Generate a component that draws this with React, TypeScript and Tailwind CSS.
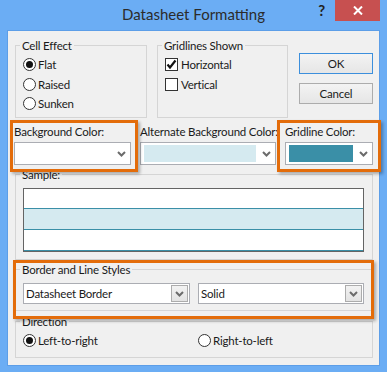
import React from "react";

const font = "font-['Lato','Liberation_Sans',sans-serif]";

function Chevron() {
    return (
        <svg width="9" height="6" viewBox="0 0 9 6" className="shrink-0">
            <path d="M1 1 L4.5 4.5 L8 1" stroke="#6b6b6b" strokeWidth="2" fill="none" />
        </svg>
    );
}

function Radio({ checked, label }: { checked?: boolean; label: string }) {
    return (
        <div className="flex items-center gap-[2px] h-[19.5px]">
            <span className="w-[13px] h-[13px] rounded-full border border-[#333] bg-white flex items-center justify-center">
                {checked && <span className="w-[7px] h-[7px] rounded-full bg-[#111]" />}
            </span>
            <span className="leading-[15px]">{label}</span>
        </div>
    );
}

function Checkbox({ checked, label }: { checked?: boolean; label: string }) {
    return (
        <div className="flex items-center gap-[3px] h-[19.5px]">
            <span className="w-[13px] h-[13px] border border-[#333] bg-white flex items-center justify-center">
                {checked && (
                    <svg width="11" height="11" viewBox="0 0 11 11">
                        <path d="M1.5 5.5 L4 8.5 L9.5 1.5" stroke="#111" strokeWidth="2.2" fill="none" />
                    </svg>
                )}
            </span>
            <span className="leading-[15px]">{label}</span>
        </div>
    );
}

function Group({ title, className, children }: { title: string; className: string; children?: React.ReactNode }) {
    return (
        <fieldset className={`border border-[#d5d5d5] p-0 m-0 ${className}`}>
            <legend className="ml-[4px] px-[2px] leading-[15px]">{title}</legend>
            {children}
        </fieldset>
    );
}

function ColorSelect({ label, width, swatch, swatchWidth }: { label: string; width: string; swatch?: string; swatchWidth?: string }) {
    return (
        <div className={width}>
            <div className="leading-[15px] whitespace-nowrap">{label}</div>
            <div className="mt-[3px] h-[23px] border border-[#abadb3] bg-white flex items-center pl-[3px] pr-[4px]">
                {swatch ? <div className={`h-[17px] ${swatchWidth} ${swatch}`} /> : null}
                <div className="ml-auto">
                    <Chevron />
                </div>
            </div>
        </div>
    );
}

function ComboBox({ value, width }: { value: string; width: string }) {
    return (
        <div className={`h-[21px] border border-[#abadb3] bg-white flex items-center pl-[2px] pr-[1px] ${width}`}>
            <span className="leading-[15px]">{value}</span>
            <span className="ml-auto w-[17px] h-[17px] border border-[#acacac] bg-gradient-to-b from-[#f2f2f2] to-[#e3e3e3] flex items-center justify-center">
                <Chevron />
            </span>
        </div>
    );
}

export default function App() {
    return (
        <div className={`w-[387px] h-[372px] bg-[#6badf4] text-[#1a1a1a] text-[11.5px] tracking-[-0.2px] ${font}`}>
            {/* Title bar */}
            <div className="h-[30px] grid grid-cols-[1fr_auto_1fr]">
                <div />
                <div className="pt-[5px] text-[15px] leading-[18px] tracking-normal text-[#2b2b2b]">Datasheet Formatting</div>
                <div className="flex justify-end items-start">
                    <span className="mt-[3px] mr-[10px] text-[15px] leading-[15px] font-bold text-[#222]">?</span>
                    <button className="w-[45px] h-[21px] bg-[#c75050] flex items-center justify-center mr-[7px]">
                        <svg width="10" height="9" viewBox="0 0 10 9">
                            <path d="M1 0.5 L9 8.5 M9 0.5 L1 8.5" stroke="#fff" strokeWidth="2" />
                        </svg>
                    </button>
                </div>
            </div>

            {/* Dialog body */}
            <div className="relative mx-[7px] w-[373px] h-[336px] border border-[#5c9ee8] bg-[#f0f0f0]">
                {/* Top row */}
                <div className="flex items-start pt-[7px] pl-[7px]">
                    <Group title="Cell Effect" className="w-[132px] h-[80px]">
                        <div className="pt-[2px] pl-[7px]">
                            <Radio checked label="Flat" />
                            <Radio label="Raised" />
                            <Radio label="Sunken" />
                        </div>
                    </Group>
                    <Group title="Gridlines Shown" className="ml-[10px] w-[131px] h-[80px]">
                        <div className="pt-[2px] pl-[7px]">
                            <Checkbox checked label="Horizontal" />
                            <Checkbox label="Vertical" />
                        </div>
                    </Group>
                    <div className="ml-[11px] mt-[15px] flex flex-col gap-[9px]">
                        <button className="w-[74px] h-[21px] border border-[#3c8fdc] bg-gradient-to-b from-[#f3f3f3] to-[#e6e6e6] leading-[15px]">OK</button>
                        <button className="w-[74px] h-[21px] border border-[#acacac] bg-gradient-to-b from-[#f3f3f3] to-[#e6e6e6] leading-[15px]">Cancel</button>
                    </div>
                </div>

                {/* Color pickers */}
                <div className="flex pl-[6px] mt-[6px] gap-[9px]">
                    <ColorSelect label="Background Color:" width="w-[117px]" />
                    <ColorSelect label="Alternate Background Color:" width="w-[136px]" swatch="bg-[#d5eaf0]" swatchWidth="w-[112px]" />
                    <ColorSelect label="Gridline Color:" width="w-[88px]" swatch="bg-[#3a8fa7]" swatchWidth="w-[64px]" />
                </div>

                {/* Sample */}
                <Group title="Sample:" className="mt-[2px] ml-[7px] w-[358px] h-[93px]">
                    <div className="pt-[6px] pl-[7px]">
                        <div className="w-[341px] border border-[#646464] flex flex-col">
                            <div className="h-[20px] bg-white border-b border-[#3a8fa7]" />
                            <div className="h-[21px] bg-[#d5eaf0] border-b border-[#3a8fa7]" />
                            <div className="h-[21px] bg-white border-b border-[#3a8fa7]" />
                        </div>
                    </div>
                </Group>

                {/* Border and line styles */}
                <Group title="Border and Line Styles" className="mt-[2px] ml-[7px] w-[358px] h-[49px]">
                    <div className="pt-[6px] pl-[7px] flex gap-[8px]">
                        <ComboBox value="Datasheet Border" width="w-[167px]" />
                        <ComboBox value="Solid" width="w-[166px]" />
                    </div>
                </Group>

                {/* Direction */}
                <Group title="Direction" className="mt-[3px] ml-[7px] w-[358px] h-[44px]">
                    <div className="pt-[2px] pl-[7px] flex">
                        <div className="w-[175px]">
                            <Radio checked label="Left-to-right" />
                        </div>
                        <Radio label="Right-to-left" />
                    </div>
                </Group>

                {/* Highlight annotations */}
                <div className="absolute left-[2px] top-[89px] w-[128px] h-[52px] border-[3px] border-[#e36c0a] shadow-[2px_2px_3px_rgba(0,0,0,0.3)]" />
                <div className="absolute left-[269px] top-[89px] w-[104px] h-[52px] border-[3px] border-[#e36c0a] shadow-[2px_2px_3px_rgba(0,0,0,0.3)]" />
                <div className="absolute left-[5px] top-[229px] w-[361px] h-[59px] border-[3px] border-[#e36c0a] shadow-[2px_2px_3px_rgba(0,0,0,0.3)]" />
            </div>
        </div>
    );
}
